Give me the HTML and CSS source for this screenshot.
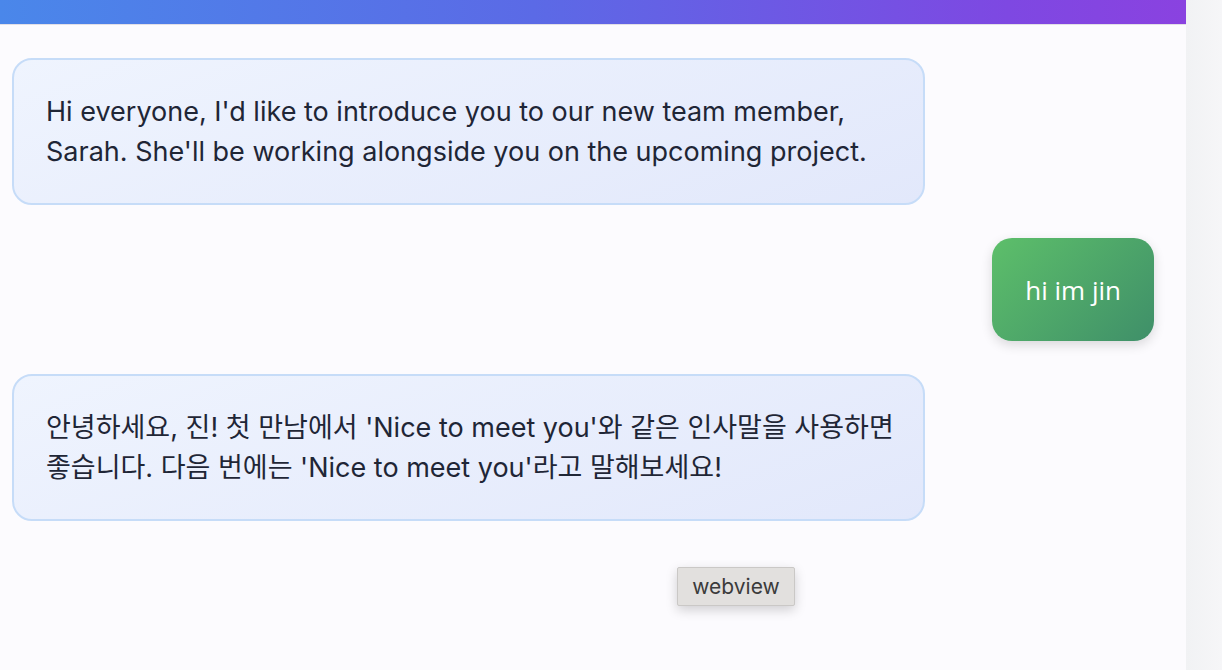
FILE: index.html
```html
<!DOCTYPE html>
<html lang="ko">
<head>
<meta charset="utf-8">
<title>Chat</title>
<link rel="stylesheet" href="styles.css">
</head>
<body>
<div class="app">
  <main class="main">
    <div class="topbar"></div>
    <div class="chat">
      <div class="msg bot">Hi everyone, I'd like to introduce you to our new team member, Sarah. She'll be working alongside you on the upcoming project.</div>
      <div class="msg user">hi im jin</div>
      <div class="msg bot">안녕하세요, 진! 첫 만남에서 'Nice to meet you'와 같은 인사말을 사용하면 좋습니다. 다음 번에는 'Nice to meet you'라고 말해보세요!</div>
    </div>
    <div class="tooltip">webview</div>
  </main>
  <aside class="side"></aside>
</div>
</body>
</html>
```

FILE: styles.css
```css
* { box-sizing: border-box; }
html, body { margin: 0; height: 100%; }
body {
  font-family: Inter, "Noto Sans CJK KR", sans-serif;
  background: #fcfbfe;
}
.app {
  display: flex;
  height: 670px;
  overflow: hidden;
}
.main {
  flex: 1;
  position: relative;
  background: #fcfbfe;
  display: flex;
  flex-direction: column;
}
.topbar {
  height: 25px;
  background: linear-gradient(90deg, #4a87ea 0%, #5b6ae6 45%, #7e48e2 85%, #8a42e0 100%);
  border-bottom: 1px solid #e2dfe6;
}
.chat {
  display: flex;
  flex-direction: column;
  gap: 33px;
  padding: 33px 32px 0 12px;
}
.msg {
  font-size: 27px;
  line-height: 40px;
  border-radius: 20px;
}
.bot {
  align-self: flex-start;
  max-width: 80%;
  width: 913px;
  padding: 31.5px 25px 31.5px 32px;
  color: #1f2636;
  word-break: keep-all;
  background: linear-gradient(160deg, #eff4fe 0%, #e2e8fb 100%);
  border: 2px solid #c6dcf8;
}
.user {
  align-self: flex-end;
  padding: 31.5px 33px;
  color: #ffffff;
  font-family: "Open Sans", sans-serif;
  font-size: 26px;
  background: linear-gradient(135deg, #5dbf6a 0%, #3f8f69 100%);
  box-shadow: 0 4px 12px rgba(0, 0, 0, 0.14);
}
.tooltip {
  position: absolute;
  left: 677px;
  top: 567px;
  width: 118px;
  height: 39px;
  display: flex;
  align-items: center;
  justify-content: center;
  font-family: Inter, sans-serif;
  font-size: 21px;
  color: #3b3b3b;
  background: #e2e0de;
  border: 1px solid #cac8c6;
  border-radius: 2px;
  box-shadow: 0 4px 12px rgba(0, 0, 0, 0.18);
}
.side {
  width: 36px;
  flex: none;
  background: linear-gradient(90deg, #f1f2f4 0%, #f6f6f8 100%);
}
```
